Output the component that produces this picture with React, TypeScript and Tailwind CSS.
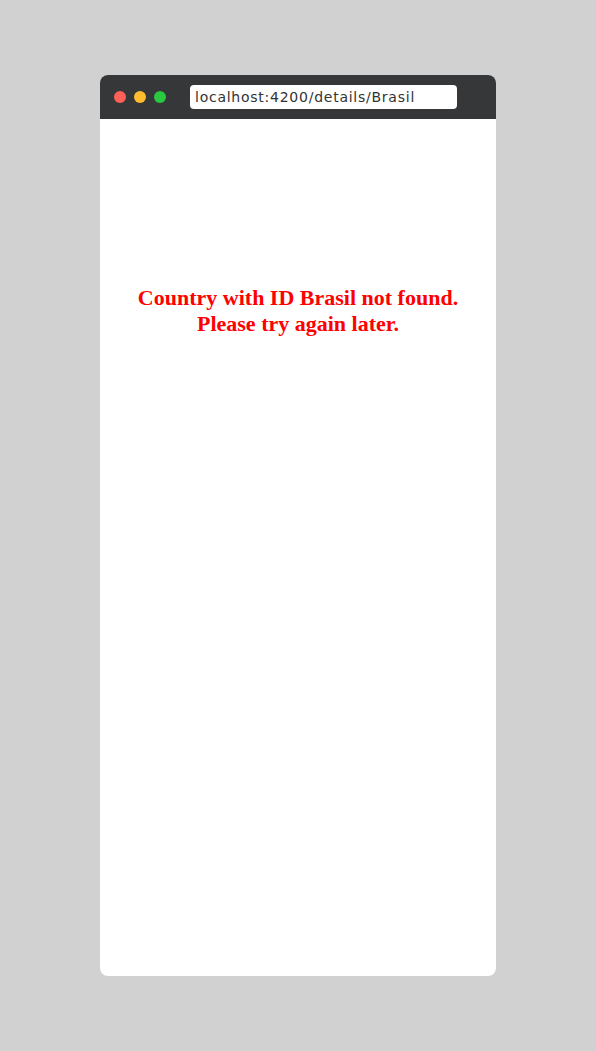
export default function App() {
  return (
    <div className="min-h-[1051px] w-full bg-[#d1d1d1] pt-[75px]">
      <div className="mx-auto flex h-[901px] w-[396px] flex-col overflow-hidden rounded-[8px] bg-white">
        <div className="flex h-[44px] items-center bg-[#363739] pl-[14px]">
          <div className="flex gap-[8px]">
            <span className="h-[12px] w-[12px] rounded-full bg-[#fe5f57]" />
            <span className="h-[12px] w-[12px] rounded-full bg-[#febc2e]" />
            <span className="h-[12px] w-[12px] rounded-full bg-[#28c840]" />
          </div>
          <div
            className="ml-[24px] flex h-[24px] w-[267px] items-center rounded-[4px] bg-white pl-[5px] text-[14px] tracking-[0.75px] text-[#333]"
            style={{ fontFamily: '"DejaVu Sans", "Open Sans", sans-serif' }}
          >
            localhost:4200/details/Brasil
          </div>
        </div>
        <div className="flex-1 pt-[166px]">
          <h2
            className="text-center text-[22px] font-bold leading-[26px] text-[#ff0000]"
            style={{ fontFamily: '"Liberation Serif", "Times New Roman", serif' }}
          >
            Country with ID Brasil not found.
            <br />
            Please try again later.
          </h2>
        </div>
      </div>
    </div>
  );
}
